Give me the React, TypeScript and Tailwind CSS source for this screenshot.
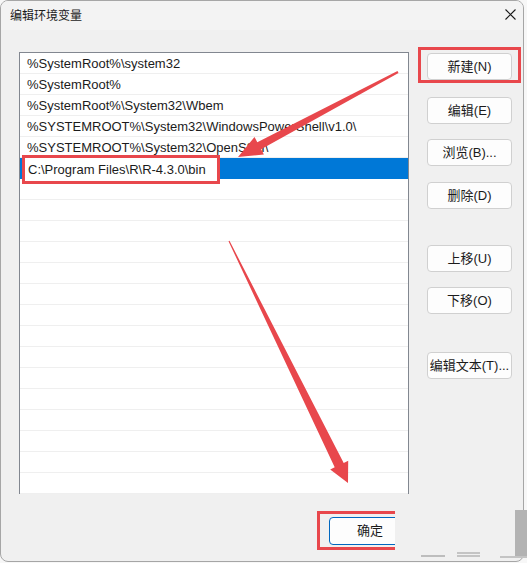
import React from 'react';

const paths = [
  '%SystemRoot%\\system32',
  '%SystemRoot%',
  '%SystemRoot%\\System32\\Wbem',
  '%SYSTEMROOT%\\System32\\WindowsPowerShell\\v1.0\\',
  '%SYSTEMROOT%\\System32\\OpenSSH\\',
];

const TOTAL_ROWS = 21;

const DialogButton = ({ label, className = '' }: { label: string; className?: string }) => (
  <button className={`h-[27px] w-[85px] rounded-[4px] border border-[#d0d0d0] bg-[#fdfdfd] text-[13px] text-[#1b1b1b] flex items-center justify-center ${className}`}>
    {label}
  </button>
);

// red annotation arrows drawn over the dialog
const Arrows = () => (
  <svg className="absolute inset-0 pointer-events-none" width="527" height="563" viewBox="0 0 527 563">
    <polygon
      points="397.5,71.1 398.5,72.9 261.1,149.2 263.9,154.5 238,157 254.5,136.9 257.3,142.2"
      fill="#e8474c"
    />
    <polygon
      points="228.5,241.2 229.5,240.8 343.7,462.9 348.2,460.7 348,483 330.2,469.5 334.7,467.3"
      fill="#e8474c"
    />
  </svg>
);

export default function App() {
  const blanks = TOTAL_ROWS - paths.length - 1;

  return (
    <div className="relative w-[527px] h-[563px] overflow-hidden bg-[#f7f7f7] font-['Liberation_Sans','Noto_Sans_CJK_SC',sans-serif] text-[#1b1b1b]">
      <div className="w-[524px] h-[562px] rounded-[8px] border border-[#a6a6a6] bg-[#f0f0f0] flex flex-col overflow-hidden">
        {/* title bar */}
        <div className="h-[29px] bg-[#f3f3f3] flex items-center justify-between pl-[9px] pr-[7px]">
          <span className="text-[12px] mt-[-1px] font-['Noto_Sans_CJK_SC',sans-serif]">编辑环境变量</span>
          <svg width="11" height="11" viewBox="0 0 11 11" className="mt-[-2px]">
            <path d="M0.5 0.5 L10.5 10.5 M10.5 0.5 L0.5 10.5" stroke="#1b1b1b" strokeWidth="1.1" />
          </svg>
        </div>

        <div className="flex pt-[22px] pl-[18px]">
          {/* path list */}
          <div className="w-[390px] h-[442px] border border-[#828790] bg-white flex flex-col">
            {paths.map((p) => (
              <div key={p} className="h-[21px] shrink-0 border-b border-[#efefef] pl-[7px] pt-[1px] text-[13px] leading-[20px] whitespace-nowrap">
                {p}
              </div>
            ))}
            <div className="relative h-[21px] shrink-0 bg-[#0078d7]">
              <div className="absolute left-[2px] top-[-3px] w-[198px] h-[29px] border-[3px] border-[#e8474c] bg-white pl-[3px] pt-[1px] text-[13px] leading-[22px] whitespace-nowrap">
                C:\Program Files\R\R-4.3.0\bin
              </div>
            </div>
            {Array.from({ length: blanks }).map((_, i) => (
              <div key={i} className="h-[21px] shrink-0 border-b border-[#efefef]" />
            ))}
          </div>

          {/* side buttons */}
          <div className="ml-[18px] pt-[1px] flex flex-col">
            <div className="relative">
              <DialogButton label="新建(N)" />
              <div className="absolute left-[-9px] top-[-6px] w-[103px] h-[36px] border-[3px] border-[#e8474c]" />
            </div>
            <DialogButton label="编辑(E)" className="mt-[17px]" />
            <DialogButton label="浏览(B)..." className="mt-[15px]" />
            <DialogButton label="删除(D)" className="mt-[16px]" />
            <DialogButton label="上移(U)" className="mt-[36px]" />
            <DialogButton label="下移(O)" className="mt-[15px]" />
            <DialogButton label="编辑文本(T)..." className="mt-[38px]" />
          </div>
        </div>

        {/* bottom: OK button, cut off at the right */}
        <div className="pl-[316px] pt-[17px]">
          <div className="w-[78px] h-[39px] border-[3px] border-r-0 border-[#e8474c] overflow-hidden pl-[9px] pt-[3px]">
            <button className="w-[82px] h-[28px] rounded-[4px] border border-[#0067c0] bg-[#fdfdfd] text-[13px] flex items-center justify-center">
              确定
            </button>
          </div>
        </div>
      </div>

      {/* stray bits of the screen behind */}
      <div className="absolute left-[515px] top-[510px] w-[12px] h-[47px] bg-[#b3b3b3]" />
      <div className="absolute left-[421px] top-[555px] w-[24px] h-[2px] bg-[#bdbdbd]" />
      <div className="absolute left-[457px] top-[552px] w-[23px] h-[2px] bg-[#c4c4c4]" />
      <div className="absolute left-[457px] top-[555px] w-[23px] h-[2px] bg-[#c4c4c4]" />
      <div className="absolute left-[500px] top-[556px] w-[27px] h-[2px] bg-[#c4c4c4]" />

      <Arrows />
    </div>
  );
}
